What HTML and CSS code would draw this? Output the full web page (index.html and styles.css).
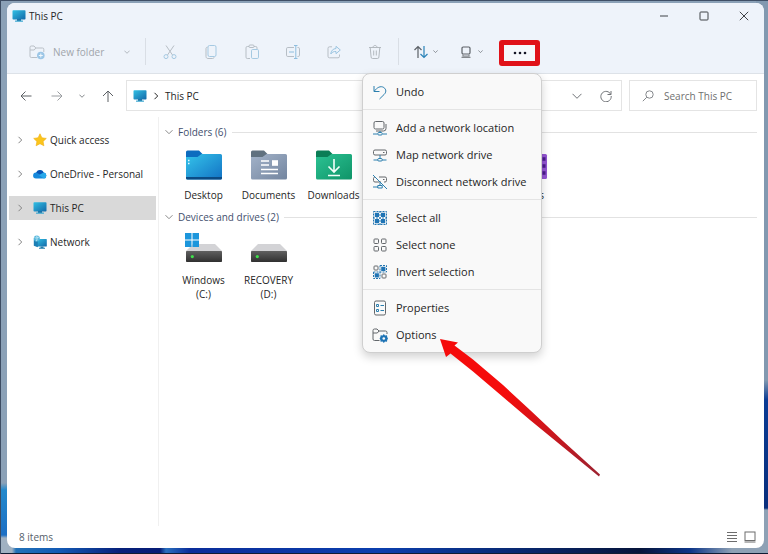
FILE: index.html
```
<!DOCTYPE html>
<html lang="en">
<head>
    <meta charset="UTF-8">
    <meta name="viewport" content="width=device-width, initial-scale=1.0">
    <title>This PC</title>
    <link rel="stylesheet" href="styles.css">
</head>
<body>
    <!-- shared symbols -->
    <svg class="defs" aria-hidden="true">
        <defs>
            <linearGradient id="screen" x1="0" y1="0" x2="1" y2="1">
                <stop offset="0" stop-color="#32c0e4"/>
                <stop offset="1" stop-color="#1268a8"/>
            </linearGradient>
            <linearGradient id="blue" x1="0" y1="0" x2="1" y2="1">
                <stop offset="0" stop-color="#35c4ea"/>
                <stop offset="1" stop-color="#1272c4"/>
            </linearGradient>
            <linearGradient id="slate" x1="0" y1="0" x2="1" y2="1">
                <stop offset="0" stop-color="#a3b3c9"/>
                <stop offset="1" stop-color="#73859f"/>
            </linearGradient>
            <linearGradient id="green" x1="0" y1="0" x2="1" y2="1">
                <stop offset="0" stop-color="#2cc293"/>
                <stop offset="1" stop-color="#0f9468"/>
            </linearGradient>
            <linearGradient id="dark" x1="0" y1="0" x2="0" y2="1">
                <stop offset="0" stop-color="#606060"/>
                <stop offset="1" stop-color="#303030"/>
            </linearGradient>
            <symbol id="monitor" viewBox="0 0 14 12">
                <path d="M5 9h4v2H5z" fill="#1a6a9c"/>
                <rect x="3" y="10.5" width="8" height="1.2" rx=".5" fill="#3aa6cf"/>
                <rect x=".5" y=".3" width="13" height="9.2" rx=".8" fill="url(#screen)"/>
            </symbol>
            <symbol id="right" viewBox="0 0 8 8">
                <path d="M2.5 .8 5.7 4 2.5 7.2" fill="none" stroke="currentColor"/>
            </symbol>
            <symbol id="down" viewBox="0 0 8 8">
                <path d="M.5 2.2 4 5.7 7.5 2.2" fill="none" stroke="currentColor"/>
            </symbol>
            <symbol id="drive" viewBox="0 0 38 32">
                <path d="M8 10h22l7 7H1z" fill="#d3d3d6"/>
                <rect x="1" y="17" width="36" height="11" rx=".8" fill="url(#dark)"/>
                <circle cx="7.3" cy="22.6" r="1.6" fill="#3fe04c"/>
            </symbol>
        </defs>
    </svg>

    <div class="window">
        <header class="titlebar">
            <svg class="pc-icon" aria-hidden="true"><use href="#monitor"/></svg>
            <h1>This PC</h1>
            <div class="window-buttons">
                <button type="button" aria-label="Minimize"><svg width="10" height="10" viewBox="0 0 10 10"><path d="M1 5h8"/></svg></button>
                <button type="button" aria-label="Maximize"><svg width="10" height="10" viewBox="0 0 10 10"><rect x="1" y="1" width="8" height="8" rx=".8"/></svg></button>
                <button type="button" aria-label="Close"><svg width="10" height="10" viewBox="0 0 10 10"><path d="M.8.8l8.4 8.4M9.2.8.8 9.2"/></svg></button>
            </div>
        </header>

        <div class="toolbar">
            <button type="button" class="new-folder" disabled>
                <svg width="16" height="16" viewBox="0 0 16 16">
                    <path d="M8 13.5H2.3A1.3 1.3 0 0 1 1 12.2V3.3A1.3 1.3 0 0 1 2.3 2H5l1.8 2h6.7a1.3 1.3 0 0 1 1.3 1.3V8M1 6h4.2l1.6-2" fill="none" stroke="#b9bfc6"/>
                    <circle cx="11.8" cy="11.5" r="3.8" fill="#9cc6e6"/>
                    <path d="M11.8 9.5v4M9.8 11.5h4" stroke="#f3f8fd"/>
                </svg>
                <span>New folder</span>
                <svg class="caret" aria-hidden="true"><use href="#down"/></svg>
            </button>
            <span class="divider"></span>
            <button type="button" class="tool" aria-label="Cut" disabled>
                <svg width="16" height="16" viewBox="0 0 16 16" fill="none" stroke="#b7bec5"><path d="M4 1.5 10.5 11M12 1.5 5.5 11"/><circle cx="4" cy="12.6" r="2" stroke="#a5c9e2"/><circle cx="12" cy="12.6" r="2" stroke="#a5c9e2"/></svg>
            </button>
            <button type="button" class="tool" aria-label="Copy" disabled>
                <svg width="16" height="16" viewBox="0 0 16 16" fill="none" stroke="#a5c9e2"><rect x="5" y="1.5" width="8" height="11" rx="1.5"/><path d="M4.5 3.2C3.5 3.2 3 3.8 3 4.7v7.8c0 1.2.8 2 2 2h4.500c1 0 1.500-.4 1.500-1.300" stroke="#b7bec5"/></svg>
            </button>
            <button type="button" class="tool" aria-label="Paste" disabled>
                <svg width="16" height="16" viewBox="0 0 16 16" fill="none" stroke="#b7bec5"><path d="M6 14.500H3.300A1.300 1.300 0 0 1 2 13.200V3.800a1.300 1.300 0 0 1 1.300-1.300H5m5 0h1.700A1.300 1.300 0 0 1 13 3.800V5"/><rect x="5" y="1" width="5" height="2.5" rx="1"/><rect x="7.5" y="5.5" width="7" height="9" rx="1.2" stroke="#a5c9e2"/></svg>
            </button>
            <button type="button" class="tool" aria-label="Rename" disabled>
                <svg width="16" height="16" viewBox="0 0 16 16" fill="none" stroke="#b7bec5"><path d="M9 12.500H2.800a1.300 1.300 0 0 1-1.300-1.300V4.800a1.300 1.300 0 0 1 1.300-1.300H9M12.500 3.500h.7a1.300 1.300 0 0 1 1.300 1.300v6.400a1.300 1.300 0 0 1-1.300 1.300h-.7"/><path d="M9 1.500h3.500M9 14.500h3.500M10.800 1.500v13M4 8h5" stroke="#8fbede"/></svg>
            </button>
            <button type="button" class="tool" aria-label="Share" disabled>
                <svg width="16" height="16" viewBox="0 0 16 16" fill="none" stroke="#b7bec5"><path d="M6 2.800H3.500A1.500 1.500 0 0 0 2 4.300v8a1.500 1.500 0 0 0 1.500 1.500h8.500a1.500 1.500 0 0 0 1.500-1.500V10.500"/><path d="M10 2.300 14.300 6 10 9.700V7.500C7.500 7.300 6 8.300 4.800 10 5 6.800 7 4.700 10 4.500z" stroke="#9cc5e1"/></svg>
            </button>
            <button type="button" class="tool" aria-label="Delete" disabled>
                <svg width="16" height="16" viewBox="0 0 16 16" fill="none" stroke="#b3b9bf"><path d="M2 3.500h12M6 3.500c0-2.700 4-2.700 4 0M3.200 3.500l.9 9.500a1.500 1.500 0 0 0 1.500 1.500h4.800a1.500 1.500 0 0 0 1.500-1.500l.9-9.500M6.700 6.500v5M9.300 6.500v5"/></svg>
            </button>
            <span class="divider"></span>
            <button type="button" class="drop-tool" aria-label="Sort">
                <svg width="16" height="16" viewBox="0 0 16 16" fill="none"><path d="M5 14V2.500M1.500 6 5 2.500 8.500 6" stroke="#5c6167" stroke-width="1.2"/><path d="M11 2v11.500M7.500 10l3.500 3.500 3.500-3.500" stroke="#2a83b8" stroke-width="1.2"/></svg>
                <svg class="caret" aria-hidden="true"><use href="#down"/></svg>
            </button>
            <button type="button" class="drop-tool" aria-label="View">
                <svg width="16" height="16" viewBox="0 0 16 16" fill="none" stroke="#5c6167" stroke-width="1.2"><rect x="4" y="3" width="8" height="7" rx="1.2"/><path d="M5 10.500v1.500h6v-1.500M3.500 13.300h9" stroke="#85898e"/></svg>
                <svg class="caret" aria-hidden="true"><use href="#down"/></svg>
            </button>
            <button type="button" class="more" aria-label="See more" aria-expanded="true">
                <svg width="16" height="4" viewBox="0 0 16 4" fill="#151525"><circle cx="3" cy="2" r="1.3"/><circle cx="8" cy="2" r="1.3"/><circle cx="13" cy="2" r="1.3"/></svg>
            </button>
        </div>

        <div class="navbar">
            <div class="history">
                <button type="button" aria-label="Back"><svg width="12" height="12" viewBox="0 0 12 12"><path d="M11.500 6H1M5.500 1.500 1 6l4.500 4.500"/></svg></button>
                <button type="button" class="muted" aria-label="Forward"><svg width="12" height="12" viewBox="0 0 12 12"><path d="M.5 6H11M6.500 1.500 11 6l-4.500 4.500"/></svg></button>
                <button type="button" class="recent" aria-label="Recent locations"><svg class="caret" aria-hidden="true"><use href="#down"/></svg></button>
                <button type="button" aria-label="Up"><svg width="12" height="12" viewBox="0 0 12 12"><path d="M6 12V1M1 6l5-5 5 5"/></svg></button>
            </div>
            <div class="address">
                <svg class="pc-icon" aria-hidden="true"><use href="#monitor"/></svg>
                <svg class="crumb-arrow" aria-hidden="true"><use href="#right"/></svg>
                <button type="button" class="crumb">This PC</button>
                <button type="button" class="address-button" aria-label="Previous locations"><svg width="10" height="10" viewBox="0 0 10 10"><path d="M.5 2.800 5 7.300l4.500-4.500" fill="none" stroke="currentColor"/></svg></button>
                <button type="button" class="address-button" aria-label="Refresh"><svg width="12" height="12" viewBox="0 0 12 12"><path d="M10.800 4.500A5.200 5.200 0 1 0 11.200 6M11 1v3.500H7.500" fill="none" stroke="currentColor"/></svg></button>
            </div>
            <label class="search">
                <svg width="12" height="12" viewBox="0 0 12 12"><circle cx="7.5" cy="4.5" r="3.7"/><path d="M4.800 7.200.8 11.200"/></svg>
                <input type="search" placeholder="Search This PC" aria-label="Search This PC">
            </label>
        </div>

        <div class="content">
            <nav class="sidebar">
                <a href="#">
                    <svg class="expand" aria-hidden="true"><use href="#right"/></svg>
                    <svg class="side-icon" viewBox="0 0 14 14"><path d="M7 .8l1.900 4 4.400.6-3.200 3 .8 4.400L7 10.700l-3.900 2.100.8-4.400-3.200-3 4.400-.6z" fill="#fbc51c" stroke="#f0ae12" stroke-width=".6" stroke-linejoin="round"/></svg>
                    <span>Quick access</span>
                </a>
                <a href="#">
                    <svg class="expand" aria-hidden="true"><use href="#right"/></svg>
                    <svg class="side-icon" viewBox="0 0 14 14"><path d="M3.200 5.500A4 4 0 0 1 10.700 5.600 3 3 0 0 1 11 11.500H3A3 3 0 0 1 3.200 5.500z" fill="#1689dc"/><path d="M3.200 5.500A4 4 0 0 1 10.700 5.600L7 7.500z" fill="#0a55b5"/><path d="M10.700 5.600A3 3 0 0 1 11 11.500L6 8.200z" fill="#28a8ea"/></svg>
                    <span>OneDrive - Personal</span>
                </a>
                <a href="#" class="selected" aria-current="page">
                    <svg class="expand" aria-hidden="true"><use href="#right"/></svg>
                    <svg class="side-icon" viewBox="0 0 14 12"><use href="#monitor"/></svg>
                    <span>This PC</span>
                </a>
                <a href="#">
                    <svg class="expand" aria-hidden="true"><use href="#right"/></svg>
                    <svg class="side-icon" viewBox="0 0 14 14"><rect x="3.5" y="4" width="10.3" height="7.5" rx=".6" fill="url(#screen)"/><path d="M7.500 11.500h3v1.200h1.500v1h-6v-1h1.500z" fill="#217cab"/><path d="M.8 3.500v7.300l4 1.500V5z" fill="#1c7fb5"/><circle cx="3.8" cy="3.5" r="3" fill="#58b8dc"/><path d="M1.500 2.500c1.500 1 3 .2 4.500-.5M3.500.7c1 2 .8 3.800-.3 5.600" fill="none" stroke="#d5f1fa" stroke-width=".7"/></svg>
                    <span>Network</span>
                </a>
            </nav>

            <main>
                <section>
                    <h2><svg class="caret" aria-hidden="true"><use href="#down"/></svg>Folders (6)</h2>
                    <div class="tiles">
                        <a href="#">
                            <svg viewBox="0 0 38 32"><path d="M1 3a1.500 1.500 0 0 1 1.500-1.500H14L17.500 5v5H1z" fill="#0d6cbf"/><path d="M1 8h11.500l4-3H35.500A1.500 1.500 0 0 1 37 6.500V29a1.500 1.500 0 0 1-1.500 1.500h-33A1.500 1.500 0 0 1 1 29z" fill="url(#blue)"/><path d="M1 28h36v1a1.500 1.500 0 0 1-1.500 1.500h-33A1.500 1.500 0 0 1 1 29z" fill="#0b4b84"/><path d="M3 11.500h1.500M3 14.500h1.500" stroke="#e6faff" stroke-width="1.5"/></svg>
                            <span>Desktop</span>
                        </a>
                        <a href="#">
                            <svg viewBox="0 0 38 32"><path d="M1 3a1.500 1.500 0 0 1 1.500-1.500H14L17.500 5v5H1z" fill="#60717f"/><path d="M1 8h11.500l4-3H35.500A1.500 1.500 0 0 1 37 6.500V29a1.500 1.500 0 0 1-1.500 1.500h-33A1.500 1.500 0 0 1 1 29z" fill="url(#slate)"/><path d="M11 12h8M11 16h8M11 20.500h17M11 24.500h17" stroke="#fff" stroke-width="1.6"/><rect x="22" y="11.2" width="6" height="5.6" fill="#fff"/></svg>
                            <span>Documents</span>
                        </a>
                        <a href="#">
                            <svg viewBox="0 0 38 32"><path d="M1 3a1.500 1.500 0 0 1 1.500-1.500H14L17.500 5v5H1z" fill="#0b7d56"/><path d="M1 8h11.500l4-3H35.500A1.500 1.500 0 0 1 37 6.500V29a1.500 1.500 0 0 1-1.500 1.500h-33A1.500 1.500 0 0 1 1 29z" fill="url(#green)"/><path d="M19 10v12.500M13.500 17.500 19 23l5.500-5.500M13 26.500h12" fill="none" stroke="#f3fffa" stroke-width="1.6"/></svg>
                            <span>Downloads</span>
                        </a>
                        <a href="#" aria-label="Music">
                            <svg viewBox="0 0 38 32"><rect x="1" y="5" width="36" height="25" rx="1.5" fill="#d9683c"/></svg>
                        </a>
                        <a href="#" aria-label="Pictures">
                            <svg viewBox="0 0 38 32"><rect x="1" y="5" width="36" height="25" rx="1.5" fill="#2f8fd0"/></svg>
                        </a>
                        <a href="#">
                            <svg viewBox="0 0 38 32"><rect x="1" y="5" width="36" height="25" rx="1.5" fill="#9355d2"/><path d="M32.500 10h3M32.500 17h3M32.500 24h3" stroke="#4a1b8b" stroke-width="3.5"/></svg>
                            <span>Videos</span>
                        </a>
                    </div>
                </section>
                <section>
                    <h2><svg class="caret" aria-hidden="true"><use href="#down"/></svg>Devices and drives (2)</h2>
                    <div class="tiles">
                        <a href="#">
                            <svg viewBox="0 0 38 32"><use href="#drive"/><path d="M0-1h6.500v6.500H0zM7.500-1H14v6.500H7.500zM0 6.500h6.500V13H0zM7.500 6.500H14V13H7.500z" fill="#1c96dc"/></svg>
                            <span>Windows (C:)</span>
                        </a>
                        <a href="#">
                            <svg viewBox="0 0 38 32"><use href="#drive"/></svg>
                            <span>RECOVERY (D:)</span>
                        </a>
                    </div>
                </section>
            </main>
        </div>

        <footer class="statusbar">
            <span>8 items</span>
            <button type="button" aria-label="Details view"><svg width="12" height="12" viewBox="0 0 12 12"><path d="M1 1.500h10M1 4.500h10M1 7.500h10M1 10.500h10"/></svg></button>
            <button type="button" aria-label="Large icons view"><svg width="12" height="12" viewBox="0 0 12 12"><rect x="1" y="1" width="10" height="8.5"/><path d="M.5 11h11"/></svg></button>
        </footer>

        <div class="menu" role="menu">
            <div class="menu-group">
                <button type="button" role="menuitem">
                    <svg viewBox="0 0 16 16"><path class="accent" d="M2 2v5.500h5.500M2.300 7.200C5 3.500 8.500 1.500 11.800 3.500c2.800 2 2.400 5 .3 7L7.500 15"/></svg>Undo
                </button>
            </div>
            <div class="menu-group">
                <button type="button" role="menuitem">
                    <svg viewBox="0 0 16 16"><rect x="2" y="1.5" width="10" height="7.5" rx="1.5"/><path d="M4 11h7.500a2.500 2.500 0 0 0 2.500-2.500V4"/><path class="accent" d="M1 14h4.500M10.500 14H15M8 11v1.500"/><rect class="accent" x="5.8" y="12.5" width="4.4" height="2.5" rx="1"/></svg>Add a network location
                </button>
                <button type="button" role="menuitem">
                    <svg viewBox="0 0 16 16"><rect x="1.5" y="3" width="13" height="5" rx="1.5"/><path d="M11 5.500h1.500"/><path class="accent" d="M1.500 13H6M10 13h4.500M8 8v3.500"/><rect class="accent" x="5.8" y="11.5" width="4.4" height="2.5" rx="1"/></svg>Map network drive
                </button>
                <button type="button" role="menuitem">
                    <svg viewBox="0 0 16 16"><path d="M7 3h6a1.500 1.500 0 0 1 1.500 1.500v2A1.500 1.500 0 0 1 13 8h-1M9 8H3a1.500 1.500 0 0 1-1.500-1.500v-2C1.500 3.500 2.300 3 3 3M11 5.500h1.500"/><path class="accent" d="M1 1l14 14M1 13h5M8 9v2.500M5.800 11.500h4.400V14H5.800z"/></svg>Disconnect network drive
                </button>
            </div>
            <div class="menu-group">
                <button type="button" role="menuitem">
                    <svg viewBox="0 0 16 16"><path class="dash" d="M1.500 1.500h13v13h-13zM8 1v14M1 8h14"/><path class="fill" d="M2.800 2.800h4.200v4.200H2.800zM9 2.800h4.200v4.200H9zM2.800 9h4.200v4.200H2.800zM9 9h4.200v4.200H9z"/></svg>Select all
                </button>
                <button type="button" role="menuitem">
                    <svg viewBox="0 0 16 16"><rect x="2" y="2" width="4.5" height="4.5" rx=".8"/><rect x="9.5" y="2" width="4.5" height="4.5" rx=".8"/><rect x="2" y="9.5" width="4.5" height="4.5" rx=".8"/><rect x="9.5" y="9.5" width="4.5" height="4.5" rx=".8"/></svg>Select none
                </button>
                <button type="button" role="menuitem">
                    <svg viewBox="0 0 16 16"><rect x="2" y="2" width="4" height="4" rx=".8"/><rect x="10" y="10" width="4" height="4" rx=".8"/><path class="dash" d="M8 1.500h6.500V8H8zM1.500 8H8v6.500H1.500z"/><path class="fill" d="M9.200 2.700h4.200v4.200H9.200zM2.700 9.200h4.200v4.200H2.700z"/></svg>Invert selection
                </button>
            </div>
            <div class="menu-group">
                <button type="button" role="menuitem">
                    <svg viewBox="0 0 16 16"><rect x="2.5" y="1" width="11" height="14" rx="1.5"/><path class="accent" d="M8.500 5.500H12M8.500 10.500H12M4.500 4.500h2v2h-2zM4.500 9.500h2v2h-2z"/></svg>Properties
                </button>
                <button type="button" role="menuitem">
                    <svg viewBox="0 0 16 16"><path d="M7.500 13.500h-5A1.500 1.500 0 0 1 1 12V3.500A1.500 1.500 0 0 1 2.500 2H5l2 2h6.500A1.500 1.500 0 0 1 15 5.500V7M1 6h4.300L7 4"/><path class="fill" d="M11.800 7l1.200 1.500 2-.2.200 1.700.8 1.500-.8 1.500-.2 1.700-2-.2-1.200 1.500-1.200-1.500-2 .2-.2-1.700-.8-1.500.8-1.500.2-1.700 2 .2z"/><circle cx="11.8" cy="11.5" r="1.3" fill="#f9f9f9" stroke="none"/></svg>Options
                </button>
            </div>
        </div>

        <svg class="pointer" width="162" height="140" viewBox="0 0 162 140" aria-hidden="true">
            <defs>
                <linearGradient id="shaft" x1="0" y1="0" x2="1" y2="1">
                    <stop offset=".4" stop-color="#f50c0c"/>
                    <stop offset="1" stop-color="#9c2230"/>
                </linearGradient>
            </defs>
            <path d="M1 1 19 4.500 15.500 7.500 34 21.500 64 47 91 72 124 103 161 136.500 160 138.500 124 109 91 82 64 59 34 33.500 11.500 15.500 7 19z" fill="url(#shaft)"/>
        </svg>
    </div>
</body>
</html>
```
FILE: styles.css
```
* {
    box-sizing: border-box;
}

body {
    margin: 0;
    min-height: 100vh;
    padding: 3px 4px 6px 7px;
    display: flex;
    font-family: "Open Sans", "Segoe UI", sans-serif;
    font-size: 10px;
    line-height: 14px;
    color: #262626;
    background:
        linear-gradient(#3f4f66, #3f4f66) top / 100% 1px no-repeat,
        linear-gradient(#3c4c62, #3c4c62) left / 1px 100% no-repeat,
        linear-gradient(#101c33, #101c33) bottom / 100% 1px no-repeat,
        linear-gradient(transparent 483px, #2389cc 490px, #1d6fc4 535px, #a0b1c2 538px) left / 12px 100% no-repeat,
        linear-gradient(#8299b0 380px, #0b3c94 400px, #0a2f7c 508px, #8ea1b5 510px) right / 12px 100% no-repeat,
        linear-gradient(90deg, #9db0c2 12px, #2272b8 16px, #1259b4 60px, #07207a 120px, #061c76 160px, #2a6fbe 166px, #0a2d9a 190px, #0b3fae 380px, #06143a 640px, #0c3588 690px, #8ea1b5 732px) bottom / 100% 12px no-repeat,
        #8ba1b7;
}

.defs {
    position: absolute;
    width: 0;
    height: 0;
}

svg {
    flex: none;
}

button {
    display: flex;
    align-items: center;
    justify-content: center;
    margin: 0;
    padding: 0;
    border: 0;
    background: none;
    font: inherit;
    color: inherit;
}

a {
    color: inherit;
    text-decoration: none;
}

.window {
    position: relative;
    flex: 1;
    display: flex;
    flex-direction: column;
    min-width: 0;
    border-radius: 8px;
    background-color: #fff;
}

.pc-icon {
    width: 14px;
    height: 12px;
}

.caret,
.expand,
.crumb-arrow {
    width: 8px;
    height: 8px;
}

/* title bar and toolbar */
.titlebar {
    display: flex;
    align-items: center;
    gap: 3px;
    height: 25px;
    padding-left: 5px;
    border-radius: 8px 8px 0 0;
    background-color: #eef3fa;
}

.titlebar h1 {
    margin: 0;
    font-size: 10px;
    font-weight: normal;
}

.window-buttons {
    display: flex;
    margin-left: auto;
}

.window-buttons button {
    width: 40px;
    height: 25px;
}

.window-buttons svg {
    fill: none;
    stroke: #3f4247;
}

.toolbar {
    display: flex;
    align-items: center;
    height: 46px;
    padding: 2px 0 0 22px;
    border-bottom: 1px solid #dde2e8;
    background-color: #eef3fa;
}

.new-folder {
    gap: 8px;
    width: 101px;
    margin-right: 15px;
    justify-content: flex-start;
    color: #a0a5ab;
}

.new-folder .caret {
    width: 6px;
    height: 6px;
    margin-left: auto;
}

.divider {
    width: 1px;
    height: 27px;
    margin-right: 3px;
    background-color: #d9dee5;
}

.tool {
    width: 41px;
    height: 28px;
}

.tool + .divider {
    margin-left: 3px;
}

.drop-tool {
    gap: 4px;
    width: 43px;
    height: 28px;
    margin-left: 2px;
}

.drop-tool .caret {
    width: 5px;
    height: 5px;
    color: #5c6167;
}

.more {
    width: 41px;
    height: 26px;
    margin: 2px 0 0 7px;
    border: 5px solid #e01219;
    border-radius: 3px;
    background-color: #f5f7fb;
}

/* navigation row */
.navbar {
    display: flex;
    align-items: center;
    height: 43px;
    padding-right: 7px;
}

.history {
    display: flex;
    width: 119px;
    padding-left: 3px;
}

.history button {
    width: 31px;
    height: 28px;
    color: #5c6065;
}

.history .recent {
    width: 20px;
}

.history .muted {
    color: #9a9da1;
}

.history svg {
    fill: none;
    stroke: currentColor;
}

.history .recent svg {
    width: 6px;
    height: 6px;
}

.address,
.search {
    display: flex;
    align-items: center;
    height: 31px;
    border: 1px solid #e4e4e4;
}

.address {
    flex: 1;
    gap: 5px;
    padding-left: 6px;
}

.crumb {
    margin-right: auto;
}

.address-button {
    width: 24px;
    height: 28px;
    color: #707377;
}

.address-button:last-child {
    margin-right: 3px;
}

.search {
    width: 128px;
    gap: 10px;
    margin-left: 7px;
    padding-left: 12px;
}

.search svg {
    fill: none;
    stroke: #85888c;
}

.search input {
    flex: 1;
    min-width: 0;
    padding: 0;
    border: 0;
    outline: 0;
    background: none;
    font: inherit;
}

.search input::placeholder {
    color: #6f6f6f;
}

/* folder tree and files */
.content {
    flex: 1;
    display: flex;
}

.sidebar {
    display: flex;
    flex-direction: column;
    gap: 10px;
    width: 152px;
    padding: 11px 2px 0;
    border-right: 1px solid #f0f0f0;
}

.sidebar a {
    display: flex;
    align-items: center;
    height: 24px;
    padding-left: 7px;
    white-space: nowrap;
}

.sidebar .selected {
    background-color: #d9d9d9;
}

.expand {
    margin-right: 9px;
    color: #858585;
}

.side-icon {
    width: 14px;
    height: 14px;
    margin-right: 3px;
}

main {
    flex: 1;
    min-width: 0;
    padding: 8px 7px 0 6px;
}

h2 {
    display: flex;
    align-items: center;
    gap: 5px;
    margin: 0;
    font-size: 10px;
    font-weight: normal;
    color: #43506e;
}

h2 .caret {
    color: #8a8a8a;
}

h2::after {
    content: "";
    flex: 1;
    height: 1px;
    background-color: #e2e2e2;
}

.tiles {
    display: flex;
    padding: 10px 0 8px 6px;
}

.tiles a {
    display: flex;
    flex-direction: column;
    align-items: center;
    gap: 7px;
    width: 65px;
    padding: 0 5px;
    text-align: center;
}

.tiles svg {
    width: 38px;
    height: 32px;
    overflow: visible;
}

.statusbar {
    display: flex;
    align-items: center;
    height: 22px;
    padding: 0 5px 0 12px;
    color: #55606a;
}

.statusbar span {
    margin-right: auto;
}

.statusbar button {
    width: 18px;
    height: 18px;
}

.statusbar svg {
    fill: none;
    stroke: #6d6d6d;
}

/* overflow menu */
.menu {
    position: absolute;
    top: 70px;
    left: 355px;
    width: 180px;
    border: 1px solid #cfcfcf;
    border-radius: 8px;
    background-color: #f9f9f9;
    box-shadow: 0 4px 10px rgba(0, 0, 0, 0.18);
    font-size: 11px;
}

.menu-group {
    padding: 4px 0;
}

.menu-group + .menu-group {
    border-top: 1px solid #e4e4e4;
}

.menu button {
    justify-content: flex-start;
    gap: 8px;
    width: 100%;
    height: 27px;
    padding-left: 9px;
    white-space: nowrap;
}

.menu svg {
    width: 16px;
    height: 16px;
    fill: none;
    stroke: #63676b;
}

.menu .accent {
    stroke: #2b7fae;
}

.menu .fill {
    fill: #1f74b5;
    stroke: none;
}

.menu .dash {
    stroke: #2476b0;
    stroke-dasharray: 2 1;
}

.pointer {
    position: absolute;
    top: 335px;
    left: 432px;
}
```
